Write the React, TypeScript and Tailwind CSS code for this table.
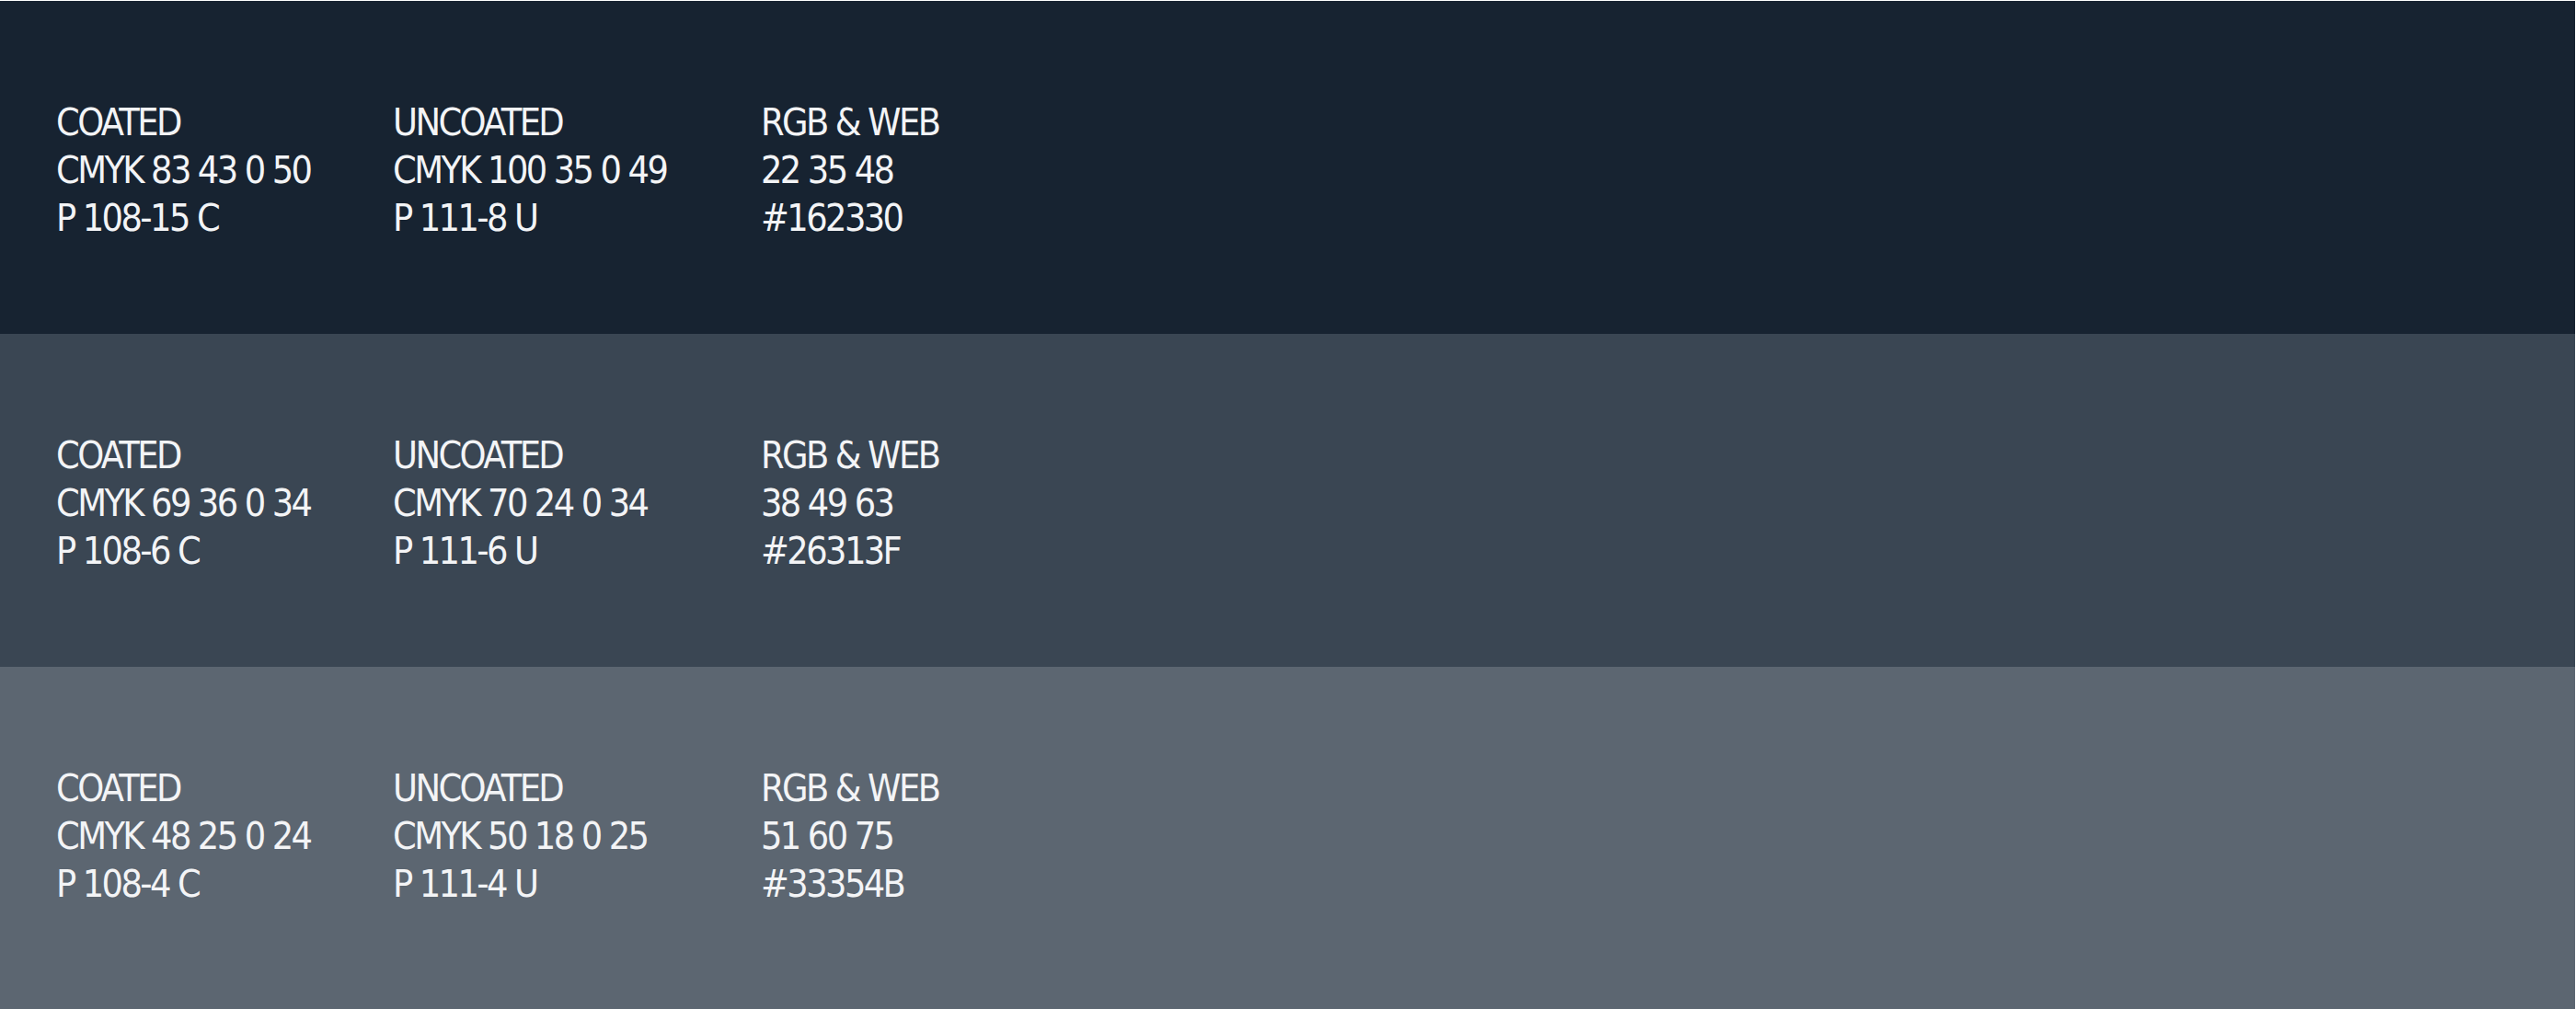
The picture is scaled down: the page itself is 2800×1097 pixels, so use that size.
import React from 'react';

interface Swatch {
  bg: string;
  height: string;
  coated: [string, string];
  uncoated: [string, string];
  rgb: [string, string];
}

const swatches: Swatch[] = [
  {
    bg: 'bg-[#172331]',
    height: 'h-[362px]',
    coated: ['CMYK 83 43 0 50', 'P 108-15 C'],
    uncoated: ['CMYK 100 35 0 49', 'P 111-8 U'],
    rgb: ['22 35 48', '#162330'],
  },
  {
    bg: 'bg-[#3a4653]',
    height: 'h-[362px]',
    coated: ['CMYK 69 36 0 34', 'P 108-6 C'],
    uncoated: ['CMYK 70 24 0 34', 'P 111-6 U'],
    rgb: ['38 49 63', '#26313F'],
  },
  {
    bg: 'bg-[#5c6671]',
    height: 'flex-1',
    coated: ['CMYK 48 25 0 24', 'P 108-4 C'],
    uncoated: ['CMYK 50 18 0 25', 'P 111-4 U'],
    rgb: ['51 60 75', '#33354B'],
  },
];

function Column({ title, lines, width }: { title: string; lines: [string, string]; width: string }) {
  return (
    <div className={`${width} shrink-0 flex flex-col`}>
      <span>{title}</span>
      <span>{lines[0]}</span>
      <span>{lines[1]}</span>
    </div>
  );
}

export default function App() {
  return (
    <div
      className="w-[2800px] h-[1097px] flex flex-col border-t border-r border-white/10 text-[#f3f4f6] text-[41px] leading-[52px] tracking-[-2.6px] overflow-hidden"
      style={{ fontFamily: '"Liberation Sans Narrow", "DejaVu Sans Condensed", "Liberation Sans", sans-serif' }}
    >
      {swatches.map((s, i) => (
        <section key={i} className={`${s.bg} ${s.height} flex pt-[106px] pl-[61px]`}>
          <Column title="COATED" lines={s.coated} width="w-[366px]" />
          <Column title="UNCOATED" lines={s.uncoated} width="w-[400px]" />
          <Column title="RGB & WEB" lines={s.rgb} width="w-[300px]" />
        </section>
      ))}
    </div>
  );
}
